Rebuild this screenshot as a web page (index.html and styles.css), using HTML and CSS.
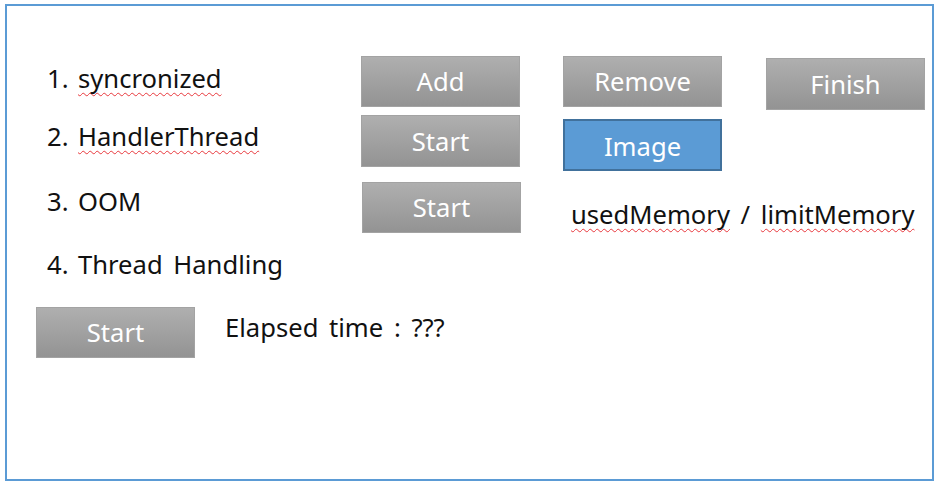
FILE: index.html
```html
<!DOCTYPE html>
<html>
<head>
<meta charset="utf-8">
<link rel="stylesheet" href="styles.css">
</head>
<body>
<div class="frame">
  <div class="board">
    <div class="label r1"><span class="num">1.</span><span class="typo">syncronized</span></div>
    <div class="btn grey r1 c2">Add</div>
    <div class="btn grey r1 c3">Remove</div>
    <div class="btn grey r1 c4 finish">Finish</div>

    <div class="label r2 l2"><span class="num">2.</span><span class="typo">HandlerThread</span></div>
    <div class="btn grey r2 c2 tall">Start</div>
    <div class="btn blue r2 c3 image">Image</div>

    <div class="label r3 l3"><span class="num">3.</span>OOM</div>
    <div class="btn grey r3 c2 start3">Start</div>
    <div class="memory r3"><span class="typo">usedMemory</span> / <span class="typo">limitMemory</span></div>

    <div class="label r4 l4"><span class="num">4.</span>Thread Handling</div>

    <div class="row5">
      <div class="btn grey">Start</div>
      <div class="elapsed">Elapsed time : ???</div>
    </div>
  </div>
</div>
</body>
</html>
```

FILE: styles.css
```css
html, body {
  margin: 0;
  padding: 0;
  background: #ffffff;
}

body {
  font-family: "Noto Sans", "Open Sans", "Liberation Sans", sans-serif;
  font-size: 25.6px;
  word-spacing: 4px;
  color: #111111;
}

.frame {
  margin: 4px 0 0 5px;
  width: 929px;
  height: 477px;
  box-sizing: border-box;
  border: 2px solid #5b9bd5;
}

.board {
  display: grid;
  grid-template-columns: 325px 202px 203px 159px;
  grid-template-rows: 59px 67px 65px 60px auto;
  padding: 50px 0 0 29px;
}

.r1 { grid-row: 1; }
.r2 { grid-row: 2; }
.r3 { grid-row: 3; }
.r4 { grid-row: 4; }
.c2 { grid-column: 2; }
.c3 { grid-column: 3; }
.c4 { grid-column: 4; }

.label {
  grid-column: 1;
  padding-left: 11px;
  line-height: 36px;
  margin-top: 5px;
  white-space: nowrap;
}
.l2 { margin-top: 4px; }
.l3 { margin-top: 2px; }
.l4 { margin-top: 0; }

.num {
  display: inline-block;
  width: 31px;
}

.typo {
  text-decoration: underline wavy #e8383d;
  text-decoration-thickness: 1px;
  text-underline-offset: 4px;
  text-decoration-skip-ink: none;
}

.btn {
  width: 159px;
  height: 51px;
  box-sizing: border-box;
  color: #ffffff;
  text-align: center;
  line-height: 46px;
  padding-top: 2px;
  white-space: nowrap;
  word-spacing: 0;
}

.grey {
  border: 1px solid #a3a3a3;
  background: linear-gradient(#afafaf, #939393);
}

.tall { height: 52px; line-height: 48px; }

.blue {
  background: #5b9bd5;
  border: 2px solid #41719c;
  height: 52px;
  line-height: 44px;
  padding-top: 4px;
}

.image { margin-top: 4px; }
.finish { margin-top: 2px; height: 52px; line-height: 48px; }
.start3 { margin-left: 1px; }

.memory {
  grid-column: 3 / span 2;
  margin: 15px 0 0 8px;
  line-height: 36px;
  white-space: nowrap;
}

.row5 {
  grid-row: 5;
  grid-column: 1 / -1;
  display: flex;
  align-items: flex-start;
  gap: 30px;
}

.elapsed {
  line-height: 36px;
  margin-top: 3px;
  white-space: nowrap;
}
```
